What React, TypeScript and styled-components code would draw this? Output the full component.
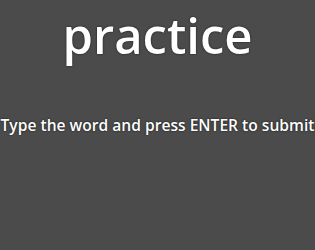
import React from 'react';
import styled, { createGlobalStyle } from 'styled-components';

const GlobalStyle = createGlobalStyle`
  html, body {
    margin: 0;
    padding: 0;
    background: #4b4b4b;
  }
  body {
    font-family: 'Open Sans', 'DejaVu Sans', sans-serif;
  }
`;

const Screen = styled.div`
  width: 315px;
  height: 250px;
  background: #4b4b4b;
  display: flex;
  flex-direction: column;
  align-items: center;
  overflow: hidden;
`;

const Title = styled.h1`
  margin: 0;
  padding-top: 3px;
  color: #fff;
  font-size: 49px;
  font-weight: 600;
  line-height: 64px;
  text-shadow: 0 0 2px #111;
`;

const Hint = styled.p`
  margin: 47px 0 0;
  color: #fff;
  font-size: 15.6px;
  font-weight: 600;
  line-height: 22px;
  white-space: nowrap;
  text-shadow: 0 0 2px #111;
`;

export default function App() {
  return (
    <>
      <GlobalStyle />
      <Screen>
        <Title>practice</Title>
        <Hint>Type the word and press ENTER to submit</Hint>
      </Screen>
    </>
  );
}
